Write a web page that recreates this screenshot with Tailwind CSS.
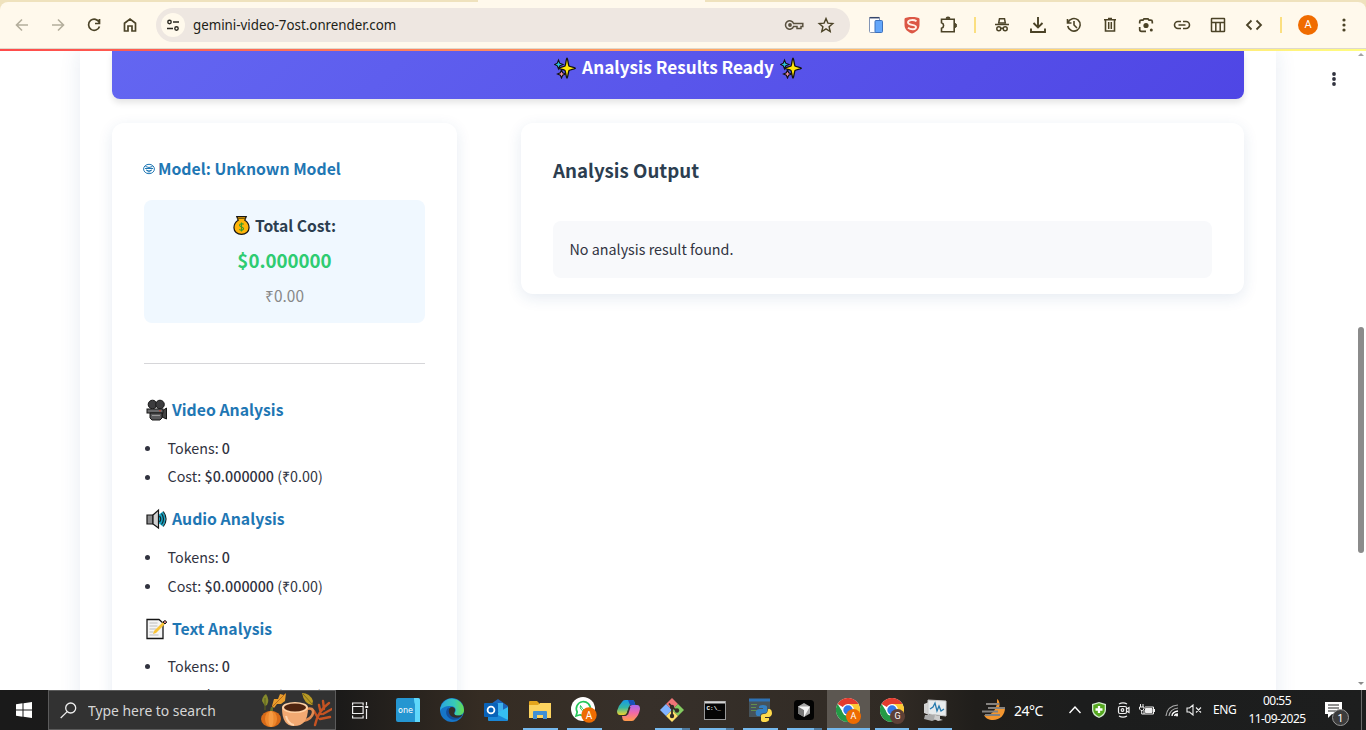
<!DOCTYPE html>
<html lang="en">
<head>
<meta charset="utf-8">
<title>Analysis Results</title>
<script src="https://cdn.jsdelivr.net/npm/@tailwindcss/browser@4"></script>
</head>
<body class="w-[1366px] h-[730px] overflow-hidden bg-white flex flex-col font-['Noto_Sans_CJK_SC',sans-serif]">
<svg class="hidden">
  <defs>
    <symbol id="sparkles" viewBox="0 0 22 22">
      <path d="M4.500 3 5.700 6.200 9 7.500 5.700 8.800 4.500 12 3.300 8.800.5 7.500 3.300 6.200Z" fill="#2bc4dd" stroke="#111" stroke-width="1.100"/>
      <path d="M7.500 13 8.700 15.800 11.500 17 8.700 18.200 7.500 21 6.300 18.200 3.500 17 6.300 15.800Z" fill="#f291a3" stroke="#111" stroke-width="1.100"/>
      <path d="M13 1.200C13.800 1.200 14.200 7.500 15 9 16.500 10 21.400 10.400 21.400 11.200S16.500 12.600 15 13.500C14.200 15 13.800 21 13 21S11.800 15 11 13.500C9.500 12.600 5 12 5 11.200S9.500 10 11 9C11.800 7.500 12.200 1.200 13 1.200Z" fill="#ffe70a" stroke="#111" stroke-width="1.300"/>
    </symbol>
    <symbol id="chrome" viewBox="0 0 24 24">
      <circle cx="12" cy="12" r="12" fill="#fff"/>
      <path d="M12 12 1.600 6A12 12 0 0 1 22.400 6L12 6.500Z" fill="#e33b2e"/>
      <path d="M1.600 6A12 12 0 0 0 12 24L17 15 12 12 7 14.500Z" fill="#249a46"/>
      <path d="M22.400 6A12 12 0 0 1 12 24L17 15 12 6Z" fill="#fcc934"/>
      <circle cx="12" cy="12" r="6" fill="#fff"/><circle cx="12" cy="12" r="4.700" fill="#3278e8"/>
    </symbol>
  </defs>
</svg>

<!-- Browser toolbar -->
<header class="h-[49px] shrink-0 bg-[linear-gradient(90deg,#efe2bd_478px,#fff9ec_478px,#fff9ec_705px,#efe2bd_705px)] border-b border-[#dfd9cc] pt-[2px]">
  <div class="h-[46px] bg-[#fff9ec] rounded-t-lg flex items-start pl-1 pt-[5px] text-[#4b4327]">
    <div class="w-9 h-9 flex items-center justify-center"><svg class="w-6 h-6 text-[#b4ae9c]" viewBox="0 0 24 24" fill="none" stroke="currentColor" stroke-width="1.600"><path d="M18 12H7M12 6.500 6.500 12 12 17.500"/></svg></div>
    <div class="w-9 h-9 flex items-center justify-center"><svg class="w-6 h-6 text-[#b4ae9c]" viewBox="0 0 24 24" fill="none" stroke="currentColor" stroke-width="1.600"><path d="M6 12h11M12 6.500 17.500 12 12 17.500"/></svg></div>
    <div class="w-9 h-9 flex items-center justify-center"><svg class="w-6 h-6" viewBox="0 0 24 24" fill="none" stroke="currentColor" stroke-width="1.700"><path d="M17.300 9.500A5.600 5.600 0 1 0 17.500 13.500M17.500 6v4.500H13"/></svg></div>
    <div class="w-9 h-9 flex items-center justify-center"><svg class="w-6 h-6" viewBox="0 0 24 24" fill="none" stroke="currentColor" stroke-width="1.700"><path d="M6.500 10.200 12 6l5.500 4.200V18H14v-5h-4v5H6.500Z"/></svg></div>
    <div class="ml-2 mt-px w-[694px] h-[34px] rounded-full bg-[#eee7e1] flex items-center pl-[5px] pr-[14px]">
      <div class="w-6 h-6 shrink-0 rounded-full bg-[#fff9ec] flex items-center justify-center"><svg class="w-4 h-4" viewBox="0 0 16 16" fill="none" stroke="#2b2921" stroke-width="1.400"><circle cx="4.500" cy="5" r="1.700"/><path d="M8 5h6M2 11.500h6"/><circle cx="11.500" cy="11.500" r="1.700"/></svg></div>
      <span class="ml-2 flex-1 text-[14px] leading-5 text-[#211e17] font-['Noto_Sans',sans-serif] whitespace-nowrap"><span class="inline-block origin-left scale-x-[.952]">gemini-video-7ost.onrender.com</span></span>
      <svg class="w-5 h-5 shrink-0" viewBox="0 0 20 20" fill="none" stroke="#59513f" stroke-width="1.500"><path d="M9.600 8.500A4.200 4.200 0 1 0 9.600 11.500H13V13.500h4v-2H18.800v-3Z"/><circle cx="6" cy="10" r="1.900" fill="#59513f" stroke="none"/></svg>
      <svg class="w-5 h-5 ml-3 shrink-0" viewBox="0 0 20 20" fill="none" stroke="#4b4327" stroke-width="1.400"><path d="m10 3.500 1.900 4.600 4.900.4-3.700 3.200 1.100 4.800L10 13.900l-4.200 2.600 1.100-4.800L3.200 8.500l4.900-.4Z"/></svg>
    </div>
    <div class="w-2"></div>
    <div class="w-9 h-9 flex items-center justify-center"><svg class="w-6 h-6" viewBox="0 0 24 24"><rect x="5.500" y="4.500" width="10" height="15" rx="1" fill="#fff" stroke="#8295b5"/><path d="M5.500 4.700h10" stroke="#36466b" stroke-width="1.500"/><rect x="11" y="7.500" width="7.500" height="12" rx="1" fill="#64a7fb" stroke="#3c71bd"/></svg></div>
    <div class="w-9 h-9 flex items-center justify-center"><svg class="w-6 h-6" viewBox="0 0 24 24"><path d="M12 4C9 4 4.500 4.500 4.500 6V12c0 4.500 3.500 7 7.500 8.500 4-1.500 7.500-4 7.500-8.500V6C19.500 4.500 15 4 12 4Z" fill="#dc5745"/><path d="M16.500 8.200C14 6.500 8 6.500 8 9.500s8 1.700 8 4.500-5 3-8 .8" fill="none" stroke="#fff1e8" stroke-width="1.900"/></svg></div>
    <div class="w-9 h-9 flex items-center justify-center"><svg class="w-6 h-6" viewBox="0 0 24 24" fill="none" stroke="currentColor" stroke-width="1.600"><path d="M5.500 6.300h12.700V18.700H5.500v-3.400c2.800-.8 2.800-4.800 0-5.600Z"/><path d="M10 5.300a2 1.300 0 0 1 4 0ZM19.200 10.500a1.300 2 0 0 1 0 4Z" fill="currentColor" stroke-width="1"/></svg></div>
    <div class="w-[18px] h-9 flex items-center justify-center"><i class="w-[2px] h-4 bg-[#fbdf80]"></i></div>
    <div class="w-9 h-9 flex items-center justify-center"><svg class="w-6 h-6" viewBox="0 0 24 24" fill="none" stroke="currentColor" stroke-width="1.500"><path d="M8.700 10 9.500 5.700h5l.8 4.300Z" fill="#fff9ec"/><path d="M5 11.500h14"/><circle cx="8.800" cy="15.800" r="2"/><circle cx="15.200" cy="15.800" r="2"/><path d="M10.500 15.300h3"/></svg></div>
    <div class="w-9 h-9 flex items-center justify-center"><svg class="w-6 h-6" viewBox="0 0 24 24" fill="none" stroke="currentColor" stroke-width="1.900"><path d="M12 4v10M7.500 10l4.500 4.500 4.500-4.500M5 15.500v3.500h14v-3.500"/></svg></div>
    <div class="w-9 h-9 flex items-center justify-center"><svg class="w-6 h-6" viewBox="0 0 24 24" fill="none" stroke="currentColor" stroke-width="1.600"><path d="M5.500 6v4h4M6 9.500A6.300 6.300 0 1 1 5.700 13M12 8v4l3 3"/></svg></div>
    <div class="w-9 h-9 flex items-center justify-center"><svg class="w-6 h-6" viewBox="0 0 24 24" fill="none" stroke="currentColor" stroke-width="1.600"><path d="M6 6.700h12M10 5.500h4M7.500 7v11h9V7"/><path d="M10.700 9v7M13.300 9v7" stroke-width="1.500"/></svg></div>
    <div class="w-9 h-9 flex items-center justify-center"><svg class="w-6 h-6" viewBox="0 0 24 24" fill="none" stroke="currentColor" stroke-width="1.700"><path d="M5.700 10.500V8.700q0-1.500 1.500-1.500H9l1-1.400h4l1 1.400h1.800q1.500 0 1.500 1.500v1.800M5.700 14v2.500q0 1.800 1.800 1.800H12"/><circle cx="12" cy="12.500" r="2.600" fill="currentColor" stroke="none"/><circle cx="17.300" cy="17" r="1.500" fill="currentColor" stroke="none"/></svg></div>
    <div class="w-9 h-9 flex items-center justify-center"><svg class="w-6 h-6" viewBox="0 0 24 24" fill="none" stroke="currentColor" stroke-width="1.600"><path d="M11 8.500H8a3.500 3.500 0 0 0 0 7h3M13 8.500h3a3.500 3.500 0 0 1 0 7h-3M8.500 12h7"/></svg></div>
    <div class="w-9 h-9 flex items-center justify-center"><svg class="w-6 h-6" viewBox="0 0 24 24" fill="none" stroke="currentColor" stroke-width="1.500"><rect x="5.500" y="5.500" width="13" height="13" rx=".5"/><path d="M5.500 9.500h13M9.800 9.500v9M14.200 9.500v9"/></svg></div>
    <div class="w-9 h-9 flex items-center justify-center"><svg class="w-6 h-6" viewBox="0 0 24 24" fill="none" stroke="currentColor" stroke-width="1.800"><path d="M9.500 7.500 5 12l4.500 4.500M14.500 7.500 19 12l-4.500 4.500"/></svg></div>
    <div class="w-[18px] h-9 flex items-center justify-center"><i class="w-[2px] h-4 bg-[#fbdf80]"></i></div>
    <div class="w-9 h-9 flex items-center justify-center"><span class="w-5 h-5 rounded-full bg-[#f06c00] text-white text-[11px] leading-5 text-center font-['Roboto',sans-serif]">A</span></div>
    <div class="w-9 h-9 flex items-center justify-center"><svg class="w-6 h-6" viewBox="0 0 24 24" fill="currentColor"><circle cx="12" cy="7" r="1.600"/><circle cx="12" cy="12" r="1.600"/><circle cx="12" cy="17" r="1.600"/></svg></div>
  </div>
</header>
<div class="h-[2px] shrink-0 bg-[linear-gradient(90deg,#ff4b4b,#fffd80)]"></div>

<!-- Page -->
<div class="h-[639px] shrink-0 overflow-hidden flex">
  <main class="ml-20 w-[1196px] h-[680px] px-8 shadow-[0_0_20px_rgba(31,70,136,0.11)]">
    <div class="h-12 rounded-b-lg bg-[linear-gradient(135deg,#6366f1,#4f46e5)] shadow-[0_4px_6px_rgba(0,0,0,0.1)] flex justify-center">
      <h2 class="h-[34px] flex items-center gap-[6px] text-white text-[17.200px] font-bold"><svg class="w-[22px] h-[22px]"><use href="#sparkles"/></svg><span class="-mt-[2px]">Analysis Results Ready</span><svg class="w-[22px] h-[22px]"><use href="#sparkles"/></svg></h2>
    </div>
    <div class="mt-6 flex items-start gap-16">
      <aside class="w-[345px] h-[640px] shrink-0 rounded-xl bg-white shadow-[0_4px_15px_rgba(31,70,136,0.11)] px-8 pt-[23px] text-[#31333f]">
        <h3 class="h-[46px] flex items-center gap-[3px] -ml-px text-[15.800px] font-bold text-[#1f77b4]"><svg class="w-3 h-3" viewBox="0 0 12 12" fill="none" stroke="currentColor" stroke-width="1"><ellipse cx="6" cy="6" rx="5.400" ry="4.700"/><path d="M2.500 3.500q3.500 2 7 0M2 5.500h8M3 7q3 2 6 0M4.500 8.800h3"/></svg>Model: Unknown Model</h3>
        <div class="mt-2 h-[123px] rounded-lg bg-[#f0f8ff] pt-[8px] flex flex-col items-center">
          <div class="h-[35px] flex items-center gap-[5px] text-[15.700px] font-bold text-[#2c3e50]"><svg class="w-[17px] h-[21px]" viewBox="0 0 18 21"><path d="M4 1h10l-1.500 4c2.500 1.500 4.500 4.500 4.500 8 0 4-3.500 7-8 7s-8-3-8-7c0-3.500 2-6.500 4.500-8Z" fill="#ffb50a" stroke="#161616" stroke-width="1.300"/><path d="M4.500 3h9" stroke="#6b4d00"/><path d="M11.300 9.300C10 8 6.800 8.500 7 10.500c.2 1.800 4.200 1.300 4.200 3.300 0 1.900-3 2.200-4.500.8M9 7.300v9.500" fill="none" stroke="#3c9a28" stroke-width="1.200"/></svg>Total Cost:</div>
          <div class="h-[35px] leading-[34px] text-[18.700px] font-bold text-[#2ecc71]">$0.000000</div>
          <div class="h-[35px] leading-[35px] text-[15.400px] text-[#888]">₹0.00</div>
        </div>
        <div class="mt-10 h-px bg-[#d6d6d9]"></div>
        <section class="mt-8">
          <h3 class="h-7 flex items-center gap-[4px] text-[15.800px] font-bold text-[#1f77b4]"><svg class="w-[22px] h-[22px] ml-[2px]" viewBox="0 0 22 22" stroke="#161616"><path d="M16 12 20.500 9v11L16 18Z" fill="#444"/><circle cx="6.500" cy="5.500" r="4.300" fill="#3c3c3e"/><circle cx="14" cy="5.500" r="4.300" fill="#3c3c3e"/><rect x="1" y="10" width="16" height="4" fill="#6a6a6c"/><path d="M4 14h12v5l-2 2H6l-2-2Z" fill="#59595b"/><path d="M6 16.500h8" stroke="#999"/><path d="M13 11.800h2" stroke="#c7402c"/></svg>Video Analysis</h3>
          <ul class="mt-[9px] text-[14.320px]">
            <li class="h-[28.800px] flex items-center"><i class="w-[5px] h-[5px] rounded-full bg-[#31333f] mt-[2px] ml-px mr-[17.500px]"></i><span>Tokens: <b class="font-medium">0</b></span></li>
            <li class="h-[28.800px] flex items-center"><i class="w-[5px] h-[5px] rounded-full bg-[#31333f] mt-[2px] ml-px mr-[17.500px]"></i><span>Cost: <b class="font-medium">$0.000000</b> (₹0.00)</span></li>
          </ul>
        </section>
        <section class="mt-[14px]">
          <h3 class="h-7 flex items-center gap-[4px] text-[15.800px] font-bold text-[#1f77b4]"><svg class="w-[22px] h-[22px] ml-[2px]" viewBox="0 0 22 22"><path d="M1 7h6v9H1Z" fill="#8c8c8e" stroke="#161616" stroke-width="1.200"/><path d="M7 7 12.500 2v18L7 16Z" fill="#d0d0d0" stroke="#161616" stroke-width="1.200"/><path d="M17 3.500q5 7.500 0 15l-4-3v-9Z" fill="#19a9c9"/><path d="M13.500 8q2.500 3 0 6M15.500 5.500q4 5.500 0 11M17.300 3.500q5.500 7.500 0 15" fill="none" stroke="#10272d" stroke-width="1.200"/></svg>Audio Analysis</h3>
          <ul class="mt-[10px] text-[14.320px]">
            <li class="h-[28.800px] flex items-center"><i class="w-[5px] h-[5px] rounded-full bg-[#31333f] mt-[2px] ml-px mr-[17.500px]"></i><span>Tokens: <b class="font-medium">0</b></span></li>
            <li class="h-[28.800px] flex items-center"><i class="w-[5px] h-[5px] rounded-full bg-[#31333f] mt-[2px] ml-px mr-[17.500px]"></i><span>Cost: <b class="font-medium">$0.000000</b> (₹0.00)</span></li>
          </ul>
        </section>
        <section class="mt-[14.400px]">
          <h3 class="h-7 flex items-center gap-[4px] text-[15.800px] font-bold text-[#1f77b4]"><svg class="w-[22px] h-[22px] ml-[2px]" viewBox="0 0 22 22"><path d="M1 1.500h12l4 3.500v15.500H1Z" fill="#f5f5f5" stroke="#161616" stroke-width="1.300"/><path d="M3.500 5h8M3.500 8h8M3.500 11h7M3.500 14h4M3.500 17h9" stroke="#bdbdbd"/><path d="m7 16 1-3 9.500-9.500 2 2L10 15Z" fill="#fac435"/><path d="m17 4 2-1.500 1.800 1.500L19 6Z" fill="#e98686" stroke="#161616"/></svg>Text Analysis</h3>
          <ul class="mt-[9px] text-[14.320px]">
            <li class="h-[28.800px] flex items-center"><i class="w-[5px] h-[5px] rounded-full bg-[#31333f] mt-[2px] ml-px mr-[17.500px]"></i><span>Tokens: <b class="font-medium">0</b></span></li>
            <li class="h-[28.800px] flex items-center"><i class="w-[5px] h-[5px] rounded-full bg-[#31333f] mt-[2px] ml-px mr-[17.500px]"></i><span>Cost: <b class="font-medium">$0.000000</b> (₹0.00)</span></li>
          </ul>
        </section>
      </aside>
      <section class="w-[723px] h-[171px] rounded-xl bg-white shadow-[0_4px_15px_rgba(31,70,136,0.11)] px-8 pt-8">
        <h2 class="h-8 leading-[30px] text-[18.700px] font-bold text-[#2c3e50]">Analysis Output</h2>
        <p class="mt-[34px] h-[57px] leading-[55px] rounded-lg bg-[#f8f9fb] pl-[16.500px] text-[14.320px] text-[#31333f]">No analysis result found.</p>
      </section>
    </div>
  </main>
  <div class="flex-1 flex justify-end">
    <svg class="w-4 h-5 mt-[18px] mr-[8px]" viewBox="0 0 16 20" fill="#31333f"><circle cx="8" cy="5" r="1.900"/><circle cx="8" cy="10" r="1.900"/><circle cx="8" cy="15" r="1.900"/></svg>
    <div class="w-4 flex flex-col items-center pl-[6px]"><svg class="w-[6px] h-1 mt-px" viewBox="0 0 6 4" fill="#a3a3a3"><path d="m0 4 3-3 3 3Z"/></svg><i class="mt-[271px] w-[6px] h-[226px] rounded-full bg-[#8b8b8b]"></i><svg class="w-[6px] h-1 mt-[129px]" viewBox="0 0 6 4" fill="#8b8b8b"><path d="m0 0 3 3 3-3Z"/></svg></div>
  </div>
</div>

<!-- Taskbar -->
<footer class="h-10 shrink-0 flex text-white font-['Noto_Sans',sans-serif] bg-[linear-gradient(90deg,#1a1a1a_0,#1b1a19_340px,#352c23_480px,#37302a_650px,#302a24_900px,#201e1b_975px,#1c1d1d_1080px,#1d1e1e_100%)]">
  <div class="w-12 flex items-center justify-center"><svg class="w-4 h-4" viewBox="0 0 16 16" fill="#fff"><path d="M0 2.200 6.500 1.300V7.500H0ZM7.500 1.200 16 0v7.500H7.500ZM0 8.500h6.500v6.200L0 13.800ZM7.500 8.500H16V16L7.500 14.800Z"/></svg></div>
  <div class="w-[288px] border border-[#5b5b5b] bg-[#323232] flex items-center pl-[11px]">
    <svg class="w-[17px] h-[17px]" viewBox="0 0 17 17" fill="none" stroke="#eee" stroke-width="1.300"><circle cx="10.700" cy="6" r="5"/><path d="M7.200 9.600.7 16"/></svg>
    <span class="ml-[11px] w-[172px] text-[14px] text-[#d6d6d6] whitespace-nowrap"><span class="inline-block origin-left scale-x-[.992]">Type here to search</span></span>
    <svg class="w-[72px] h-[36px] shrink-0" viewBox="0 0 72 36">
      <path d="M2 9q0-4 4-7 4 6 1 11l-2 1Z" fill="#85892c"/><path d="M5 6v12" stroke="#59601c"/>
      <path d="m12 14 2-7 4 0 2-5 4 1 2-2-1 8-4 3-4 0-3 4Z" fill="#e89d2c"/><path d="M12 15 25 2" stroke="#b66819"/>
      <path d="M42 1q8 0 11 8l-1 4Q44 12 42 1Z" fill="#b99a25"/><path d="m43 2 10 11" stroke="#7c6a17"/>
      <ellipse cx="11" cy="27" rx="10" ry="8" fill="#d76a18"/><ellipse cx="11" cy="27" rx="6" ry="8" fill="#ee882d"/><ellipse cx="11" cy="27" rx="2.500" ry="8" fill="#f69b43"/><path d="m10 19 1-4 2 0 0 4" fill="#627028"/>
      <path d="M55 33q3-14 14-22M58 26l-4-7M61 22l-2-9M64 17l-1-8M60 27l10-2M63 22l9-5" stroke="#c65322" stroke-width="2.400" fill="none" stroke-linecap="round"/>
      <path d="M46 17q8-2 7 4t-10 8" fill="none" stroke="#e08a50" stroke-width="2.600"/>
      <path d="M22 16q0 18 12 18 14 0 14-18Z" fill="#f1a972"/><path d="M26 24q2 8 8 9" stroke="#ffd5ad" stroke-width="2" fill="none"/>
      <ellipse cx="35" cy="15.500" rx="13" ry="5.500" fill="#ffd1a4"/><ellipse cx="35" cy="15.500" rx="11" ry="4" fill="#4f2510"/>
    </svg>
  </div>
  <div class="w-[50px] pr-[2px] flex items-center justify-center"><svg class="w-[17px] h-[17px]" viewBox="0 0 17 17" fill="none" stroke="#eee" stroke-width="1.200"><path d="M.6 3.500V1h10.500v2.500M.6 13.500V16h10.500v-2.500M.6 4.500h10.500v7H.6ZM14.500 0v3.500M14.500 7v10"/><path d="M13.200 5h3" stroke-width="2"/></svg></div>

  <div class="w-11 flex items-center justify-center"><svg class="w-6 h-6" viewBox="0 0 24 24"><rect width="24" height="24" rx="2" fill="#2596d1"/><path d="M18 0h4q2 0 2 2v22h-5V6q-1-1-1-6Z" fill="#5fd8fb"/><text x="2" y="14.500" font-family="DejaVu Sans" font-size="8" fill="#fff" textLength="15" lengthAdjust="spacingAndGlyphs">one</text></svg></div>
  <div class="w-11 flex items-center justify-center"><svg class="w-6 h-6" viewBox="0 0 24 24"><defs><linearGradient id="eg"><stop stop-color="#2aa6df"/><stop offset=".6" stop-color="#37c9b8"/><stop offset="1" stop-color="#67dc4c"/></linearGradient></defs><circle cx="12" cy="12" r="12" fill="#1675c8"/><path d="M.3 10A12 12 0 0 1 24 12c0 4-3 5.500-6 5.500-4 0-4-2-3-3 2-3 0-6.500-4.500-6.500C5 8 1 10 .3 13Z" fill="url(#eg)"/><path d="M8 14c0-3 2-5 4-5 3 0 4 3 2.500 5.200-1 1.800.5 3.300 3.500 3.300 2 0 3.500-.5 4.500-1-1.500 3-4 4-7 4-4 0-7.500-2.500-7.500-6.500Z" fill="#332d29"/><path d="M9 9.500C5 11 4.500 19 12 21.500c4 .8 7-.3 9-3C15 21.500 7 19 9 9.500Z" fill="#144e9c"/></svg></div>
  <div class="w-11 flex items-center justify-center"><svg class="w-6 h-6" viewBox="0 0 24 24"><path d="M4 8 14 1l10 7v13q0 2-2 2H6q-2 0-2-2Z" fill="#1b65ba"/><path d="M7 5h12v9H7Z" fill="#3fb0ec"/><path d="m4 20 20-11v12q0 2-2 2H6q-2 0-2-2Z" fill="#35bff2"/><path d="m4 12 20 10q-1 1-2 1H6q-2 0-2-2Z" fill="#1a87d7"/><rect y="5" width="14" height="14" rx="1" fill="#0962b8"/><circle cx="7" cy="12" r="3.400" fill="none" stroke="#fff" stroke-width="1.800"/></svg></div>
  <div class="w-11 flex items-center justify-center relative"><svg class="w-[22px] h-5" viewBox="0 0 22 20"><path d="M0 2q0-1 1-1h7l2 2v4H0Z" fill="#e4a51c"/><path d="M0 5h9l2-2h11v15H0Z" fill="#fcd35f"/><path d="M4 19v-7q0-1 1-1h12q1 0 1 1v7h-4v-4H8v4Z" fill="#3f8fd4"/></svg><i class="absolute bottom-0 left-[5px] w-[35px] h-[2px] bg-[#76b9ed]"></i></div>
  <div class="w-11 flex items-center justify-center relative"><svg class="w-[26px] h-[26px]" viewBox="0 0 26 26"><circle cx="12" cy="12" r="12" fill="#fff"/><path d="m5 19 1.200-4A7 7 0 1 1 9 17.800Z" fill="none" stroke="#26c75b" stroke-width="1.700"/><path d="M9.500 8.500q-1.500 4 5 7 3-1 1-2.500l-2 .5-2-2Z" fill="none" stroke="#26c75b"/><circle cx="18" cy="18" r="7.700" fill="#ee6c02"/><text x="18" y="21.500" text-anchor="middle" font-family="Roboto" font-size="10" fill="#fff">A</text></svg><i class="absolute bottom-0 left-[5px] w-[35px] h-[2px] bg-[#76b9ed]"></i></div>
  <div class="w-11 flex items-center justify-center"><svg class="w-[23px] h-[21px]" viewBox="0 0 23 21"><defs><linearGradient id="ca" x2="0" y2="1"><stop stop-color="#1599e8"/><stop offset=".5" stop-color="#35b7a5"/><stop offset="1" stop-color="#f0d42a"/></linearGradient><linearGradient id="cb" x2="0" y2="1"><stop stop-color="#aa68ef"/><stop offset=".5" stop-color="#f269a6"/><stop offset="1" stop-color="#ff9b49"/></linearGradient></defs><path d="M5 2Q6 0 8 0h7q2 0 2.500 2l.8 3h-4.500q-1.500 0-2 2l-2 6q-.8 2-3 2H3q-3 0-3-4 1-5 5-9Z" fill="url(#ca)"/><path d="M18 19q-1 2-3 2H8q-2 0-2.500-2L5 16h3.500q1.500 0 2-2l2-7q.8-2 3-2H20q3 0 3 4-1 6-5 10Z" fill="url(#cb)"/><path d="M11 0h4q2 0 2.500 2l.8 3H13Z" fill="#1a4fb9"/><path d="m12.800 7-2.500 7.500" stroke="#37302a" stroke-width="1.500"/></svg></div>
  <div class="w-11 flex items-center justify-center relative"><svg class="w-6 h-6" viewBox="0 0 24 24"><path d="m12 0 6 6-6 6-6-6Z" fill="#ef7576"/><path d="m6 6 6 6-6 6-6-6Z" fill="#80b3ff"/><path d="m18 6 6 6-6 6-6-6Z" fill="#83cb60"/><path d="m12 12 6 6-6 6-6-6Z" fill="#ffe16c"/><path d="M9 5.500 12 9v9M12 9.500l5 3" stroke="#332c26" stroke-width="1.800" fill="none"/><g fill="#332c26"><circle cx="12" cy="9" r="2.200"/><circle cx="17" cy="12.500" r="2.200"/><circle cx="12" cy="18" r="2.200"/></g></svg><i class="absolute bottom-0 left-[5px] w-[35px] h-[2px] bg-[#76b9ed] border-r-8 border-[#4f7ba0]"></i></div>
  <div class="w-11 pr-[2px] flex items-center justify-center relative"><svg class="w-[22px] h-[19px]" viewBox="0 0 22 19"><rect x=".5" y=".5" width="21" height="18" fill="#050505" stroke="#999"/><path d="M1 1.500h20" stroke="#d5d5d5" stroke-width="2"/><text x="2.500" y="9" font-family="Liberation Mono" font-weight="bold" font-size="6" fill="#fff">C:\_</text></svg><i class="absolute bottom-0 left-[5px] w-[35px] h-[2px] bg-[#76b9ed] border-r-8 border-[#4f7ba0]"></i></div>
  <div class="w-11 flex items-center justify-center relative"><svg class="w-6 h-6" viewBox="0 0 24 24"><rect x="1" y="1" width="21" height="18" fill="#46535b"/><path d="M1 2h21" stroke="#2e72b5" stroke-width="3"/><path d="M3 6.500h6M3 9.500h5M3 12.500h6" stroke="#638d4e"/><path d="M11 9q0-2 4-2t4 2v4q0 2-3 2-4 0-4 3H9q-2-2-1-5 1-2 4-2h3v-1h-4Z" fill="#3580c1"/><path d="M20 11h2q2 1 2 4t-3 4h-4v1h4v2q-1 2-5 2-3 0-3-2v-4q0-2 3-2 4 0 4-5Z" fill="#ffda4b"/></svg><i class="absolute bottom-0 left-[5px] w-[35px] h-[2px] bg-[#76b9ed]"></i></div>
  <div class="w-11 flex items-center justify-center relative"><svg class="w-5 h-5" viewBox="0 0 20 20"><rect width="20" height="20" rx="3.500" fill="#030303"/><path d="m10 3 6 3.500v7L10 17l-6-3.500v-7Z" fill="#a5a5a5"/><path d="m4 6.500 6 3.500v7l-6-3.500Z" fill="#777"/><path d="M4 6.500h12L10 17v-7Z" fill="#f4f4f4"/></svg><i class="absolute bottom-0 left-[5px] w-[35px] h-[2px] bg-[#76b9ed] border-r-8 border-[#4f7ba0]"></i></div>
  <div class="w-[43px] ml-px mr-px pr-[2px] flex items-center justify-center relative bg-[#5c5751]"><svg class="w-6 h-6"><use href="#chrome"/></svg><span class="absolute left-[19px] top-[19px] w-[15px] h-[15px] rounded-full bg-[#ee6c02] text-[9px] leading-[15px] text-center font-['Roboto',sans-serif]">A</span><i class="absolute bottom-0 left-0 w-[43px] h-[2px] bg-[#76b9ed]"></i></div>
  <div class="w-[43px] pr-[2px] flex items-center justify-center relative"><svg class="w-6 h-6"><use href="#chrome"/></svg><span class="absolute left-[19px] top-[19px] w-[15px] h-[15px] rounded-full bg-[#5d4037] text-[9px] leading-[15px] text-center font-['Roboto',sans-serif]">G</span><i class="absolute bottom-0 left-1 w-[34px] h-[2px] bg-[#76b9ed]"></i></div>
  <div class="w-[43px] pr-[2px] flex items-center justify-center relative"><svg class="w-6 h-6" viewBox="0 0 24 24"><path d="m1 6 5-2v13l-5-2Z" fill="#d2d2d2"/><path d="M2 17h10l5 3-8 3-8-2Z" fill="#aaa"/><path d="M5 2 23 3v15L5 16Z" fill="#e7ebed" stroke="#c8c8c8"/><path d="m12 17 5 1v3l3 1-5 1-4-2Z" fill="#ccc"/><path d="m7 11 3-2 2-4 2 8 2-5 2 5 3-2" fill="none" stroke="#2579ad" stroke-width="1.300"/></svg><i class="absolute bottom-0 left-1 w-[34px] h-[2px] bg-[#76b9ed]"></i></div>

  <div class="w-[25px]"></div>
  <div class="w-6 flex items-center"><svg class="w-6 h-[22px]" viewBox="0 0 24 22"><path d="M15 0c3 2 3 6 2 9h6c0 7-5 12-12 12-4 0-8-2-9-5 7 2 14-6 13-16Z" fill="#f3962f"/><path d="M4 5h13M6 9h17M0 12.500h16M3 16h15" stroke="#85827f" stroke-width="1.800"/></svg></div>
  <div class="ml-2 w-[46px] flex items-center text-[14px] tracking-[-.5px] whitespace-nowrap">24°C</div>
  <div class="w-[33px] flex items-center justify-end"><svg class="mr-3 w-3 h-2 shrink-0" viewBox="0 0 12 8" fill="none" stroke="#fff" stroke-width="1.400"><path d="m.5 7 5.500-6 5.500 6"/></svg></div>
  <div class="w-6 -ml-[6px] flex items-center justify-center"><svg class="w-[14px] h-4" viewBox="0 0 14 16"><path d="m7 0 7 2v6q0 5-7 8-7-3-7-8V2Z" fill="#d3ead0"/><path d="m7 1.200 5.700 1.700V8Q12.500 12 7 14.700 1.500 12 1.300 8V2.900Z" fill="#55a81f"/><path d="M7 4v7M3.500 7.500h7" stroke="#fff" stroke-width="2.300"/></svg></div>
  <div class="w-6 flex items-center justify-center"><svg class="w-[13px] h-4" viewBox="0 0 13 16" fill="none" stroke="#eee" stroke-width="1.200"><path d="M2 2Q6-.2 10 2M2 14q4 2.200 8 0"/><rect x="1.500" y="4.500" width="8" height="7" rx="1.500"/><circle cx="5.500" cy="8" r="1.300"/><path d="m9.500 7 2.500-1.500v5L9.500 9"/></svg></div>
  <div class="w-6 flex items-center justify-center"><svg class="w-4 h-[13px]" viewBox="0 0 16 13" fill="none" stroke="#eee"><path d="M1.500 0v3M4 0v3M.5 3H5v2L3.500 6.500H2L.5 5ZM2.700 6v4H5"/><path d="M6 3h8.500v7H5V6"/><path d="M6.500 4.500h6.500v4H6.500Z" fill="#eee"/><path d="M15.500 5v3"/></svg></div>
  <div class="w-6 ml-[1px] flex items-center justify-center"><svg class="w-[14px] h-[14px]" viewBox="0 0 14 14" fill="none"><path d="M1 13Q2 3 13 2M4 13Q5 6 13 5" stroke="#aaa" stroke-width="1.200"/><path d="M7 13q0-4 6-5M9.500 13q.5-2 3.500-2" stroke="#fff" stroke-width="1.300"/><circle cx="12" cy="12.500" r="1" fill="#fff"/></svg></div>
  <div class="w-6 -ml-[2px] flex items-center justify-center"><svg class="w-4 h-3" viewBox="0 0 16 12" fill="none" stroke="#eee" stroke-width="1.100"><path d="M1 4h2.500L7 1v10L3.500 8H1ZM10 3.500l5 5M15 3.500l-5 5"/></svg></div>
  <div class="w-[37px] pl-[7px] flex items-center text-[12px] tracking-[-.45px]">ENG</div>
  <div class="w-[68px] flex flex-col items-center pt-[2px] text-[12px] leading-[18px] tracking-[-.55px] whitespace-nowrap"><span>00:55</span><span>11-09-2025</span></div>
  <div class="w-[40px] relative flex items-center"><svg class="ml-[14px] w-[17px] h-[16px] shrink-0 -mt-[1px]" viewBox="0 0 17 16"><path d="M0 0h17v12H7l-4 4v-4H0Z" fill="#fff"/><path d="M3 3h11M3 6h11M3 9h8" stroke="#222"/></svg><span class="absolute left-[21px] top-[19px] w-[17px] h-[17px] rounded-full border border-[#999] bg-[#3c3c3c] text-[11px] leading-[15px] text-center">1</span></div>
  <i class="ml-auto mr-1 w-px h-10 bg-[#6a6a6a]"></i>
</footer>
</body>
</html>
